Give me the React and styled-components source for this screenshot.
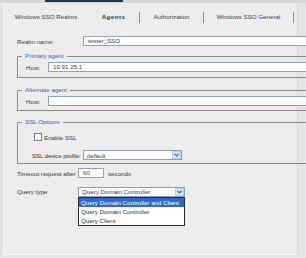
// Imports
import React from "react";
import styled, { createGlobalStyle } from "styled-components";

// Global
const Global = createGlobalStyle`
	html, body{
		margin: 0;
		padding: 0;
		width: 306px;
		height: 258px;
		overflow: hidden;
		background-color: #e4e4e4;
		font-family: "Liberation Sans", Arial, sans-serif;
		font-size: 6.2px;
		color: #3a3a3a;
	}
`;

// Chevron for the combo boxes
const Chevron = () => (
	<svg width="5" height="4" viewBox="0 0 5 4">
		<path d="M0.5 0.8 L2.5 2.9 L4.5 0.8" fill="none" stroke="#4a5f8c" strokeWidth="1.1" />
	</svg>
);

// Combo box
const Combo = ({ value, width }) => (
	<Select $w={ width }>
		<span>{ value }</span>
		<ArrowButton><Chevron /></ArrowButton>
	</Select>
);

// Component
const App = () => {

	const tabs = [
		{ label: "Windows SSO Realms", w: 84 },
		{ label: "Agents", w: 51, active: true, sep: true },
		{ label: "Authorization", w: 63, sep: true },
		{ label: "Windows SSO General", w: 89, sep: true }
	];

	// Return
	return(
		<>
			<Global />
			<TopStrip>
				<Indicator />
			</TopStrip>
			<Panel>
				<Tabs>
					{ tabs.map((t) => (
						<React.Fragment key={ t.label }>
							<Tab $w={ t.w } $active={ t.active }>{ t.label }</Tab>
							{ t.sep && <Divider /> }
						</React.Fragment>
					)) }
				</Tabs>
				<Form>
					<Row>
						<Label $w={ 66 }>Realm name:</Label>
						<Input $w={ 223 } $open>tester_SSO</Input>
					</Row>

					<Group $mt={ 6 } $pb={ 5 }>
						<Legend>Primary agent</Legend>
						<Row>
							<Label $w={ 22 } $ml={ 8 }>Host:</Label>
							<Input $w={ 258 } $open>10.91.25.1</Input>
						</Row>
					</Group>

					<Group $mt={ 8 } $pb={ 4 }>
						<Legend>Alternate agent</Legend>
						<Row>
							<Label $w={ 22 } $ml={ 8 }>Host:</Label>
							<Input $w={ 258 } $open />
						</Row>
					</Group>

					<Group $mt={ 7 } $pb={ 3 } $pt={ 6 }>
						<Legend>SSL Options</Legend>
						<Row $ml={ 16 }>
							<Check />
							<span>Enable SSL</span>
						</Row>
						<Row $ml={ 14 } $mt={ 8 }>
							<Label $w={ 51 } $nowrap>SSL device profile:</Label>
							<Combo value="default" width={ 99 } />
						</Row>
					</Group>

					<Row $mt={ 4 }>
						<Label $w={ 61 }>Timeout request after</Label>
						<Input $w={ 26 }>60</Input>
						<Suffix>seconds</Suffix>
					</Row>

					<QueryRow>
						<Label $w={ 61 }>Query type:</Label>
						<Column>
							<Combo value="Query Domain Controller" width={ 107 } />
							<List>
								<Option $selected>Query Domain Controller and Client</Option>
								<Option>Query Domain Controller</Option>
								<Option>Query Client</Option>
							</List>
						</Column>
					</QueryRow>
				</Form>
			</Panel>
		</>
	);

};

// Styled
const TopStrip = styled.div`
	height: 3px;
	background-color: #d6d6d6;
	display: flex;
`;

const Indicator = styled.div`
	margin-left: 45px;
	width: 78px;
	height: 2px;
	background-color: #1d3563;
`;

const Panel = styled.div`
	margin-left: 3px;
	width: 293px;
	height: 251px;
	background-color: #ececec;
	border-left: 1px solid #f6f6f6;
	border-right: 1px solid #d8d8d8;
	border-bottom: 1px solid #f7f7f7;
	overflow: visible;
`;

const Tabs = styled.div`
	display: flex;
	align-items: center;
	height: 28px;
`;

const Tab = styled.div`
	width: ${ p => p.$w }px;
	text-align: center;
	line-height: 10px;
	color: #3c3c3c;
	font-weight: ${ p => p.$active ? "bold" : "normal" };
	letter-spacing: ${ p => p.$active ? "0.45px" : "0" };
`;

const Divider = styled.div`
	width: 1px;
	height: 11px;
	background-color: #8e8e8e;
`;

const Form = styled.div`
	padding: 5px 0 0 13px;
`;

const Row = styled.div`
	display: flex;
	align-items: center;
	height: 10px;
	margin-left: ${ p => p.$ml || 0 }px;
	margin-top: ${ p => p.$mt || 0 }px;
`;

const Label = styled.div`
	width: ${ p => p.$w }px;
	margin-left: ${ p => p.$ml || 0 }px;
	flex-shrink: 0;
	white-space: nowrap;
	letter-spacing: ${ p => p.$nowrap ? "-0.15px" : "0" };
`;

const Input = styled.div`
	box-sizing: border-box;
	width: ${ p => p.$w }px;
	height: 10px;
	flex-shrink: 0;
	background-color: #ffffff;
	border: 1px solid #8fa0b8;
	border-right-width: ${ p => p.$open ? 0 : 1 }px;
	padding-left: 4px;
	line-height: 8px;
	white-space: nowrap;
`;

const Suffix = styled.span`
	margin-left: 4px;
`;

const Group = styled.fieldset`
	box-sizing: border-box;
	width: 289px;
	margin: ${ p => p.$mt }px 0 0 0;
	padding: ${ p => p.$pt || 2 }px 0 ${ p => p.$pb }px 0;
	border: 1px solid #8a8a8a;
	border-right: none;
	min-width: 0;
`;

const Legend = styled.legend`
	margin-left: 4px;
	padding: 0 3px;
	line-height: 8px;
	color: #3d5fae;
`;

const Check = styled.div`
	box-sizing: border-box;
	width: 8px;
	height: 8px;
	margin-right: 2px;
	background-color: #fbfbfb;
	border: 1px solid #6f7c8e;
`;

const Select = styled.div`
	box-sizing: border-box;
	width: ${ p => p.$w }px;
	height: 10px;
	display: flex;
	align-items: center;
	justify-content: space-between;
	background-color: #ffffff;
	border: 1px solid #8fa0b8;
	padding-left: 3px;
	white-space: nowrap;
`;

const ArrowButton = styled.div`
	box-sizing: border-box;
	width: 9px;
	height: 8px;
	display: flex;
	align-items: center;
	justify-content: center;
	background-color: #d3e0fa;
	border: 1px solid #b9cbf0;
`;

const QueryRow = styled.div`
	display: flex;
	align-items: flex-start;
	margin-top: 9px;
	line-height: 10px;
`;

const Column = styled.div`
	display: flex;
	flex-direction: column;
`;

const List = styled.div`
	box-sizing: border-box;
	width: 107px;
	background-color: #ffffff;
	border: 1px solid #2a2a2a;
`;

const Option = styled.div`
	height: 9px;
	line-height: 9px;
	padding-left: 2px;
	white-space: nowrap;
	background-color: ${ p => p.$selected ? "#316ac5" : "transparent" };
	color: ${ p => p.$selected ? "#ffffff" : "#2c2c2c" };
`;

// Export
export default App;
